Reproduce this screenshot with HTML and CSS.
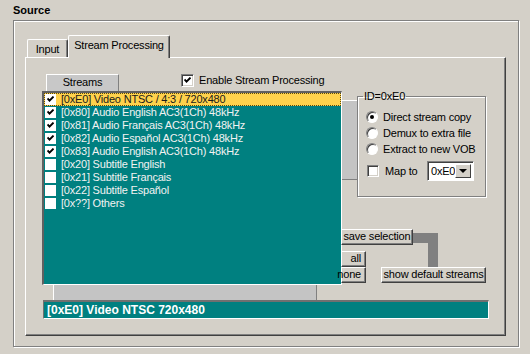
FILE: index.html
```
<!DOCTYPE html>
<html>
	<head>
		<meta charset="utf-8" />
		<title>Source</title>
		<link rel="stylesheet" href="styles.css">
	</head>
	<body>
		<div class="title">Source</div>
		<div class="group">
			<div class="tabs">
				<div class="tab">Input</div>
				<div class="tab active">Stream Processing</div>
			</div>
			<div class="panel">
				<div class="backdrop backdrop-a"></div>
				<div class="backdrop backdrop-b"></div>

				<div class="head">
					<div class="col-head">Streams</div>
					<label class="check enable"><span class="box on"></span>Enable Stream Processing</label>
				</div>

				<div class="main">
					<div class="list">
						<div class="row selected"><span class="lbox on"></span>[0xE0] Video NTSC / 4:3 / 720x480</div>
						<div class="row"><span class="lbox on"></span>[0x80] Audio English AC3(1Ch) 48kHz</div>
						<div class="row"><span class="lbox on"></span>[0x81] Audio Français AC3(1Ch) 48kHz</div>
						<div class="row"><span class="lbox on"></span>[0x82] Audio Español AC3(1Ch) 48kHz</div>
						<div class="row"><span class="lbox on"></span>[0x83] Audio English AC3(1Ch) 48kHz</div>
						<div class="row"><span class="lbox"></span>[0x20] Subtitle English</div>
						<div class="row"><span class="lbox"></span>[0x21] Subtitle Français</div>
						<div class="row"><span class="lbox"></span>[0x22] Subtitle Español</div>
						<div class="row"><span class="lbox"></span>[0x??] Others</div>
					</div>

					<div class="side">
						<fieldset class="idgroup">
							<legend>ID=0xE0</legend>
							<div class="radio"><span class="dot on"></span>Direct stream copy</div>
							<div class="radio"><span class="dot"></span>Demux to extra file</div>
							<div class="radio"><span class="dot"></span>Extract to new VOB</div>
							<div class="mapto">
								<span class="box"></span>
								<span class="maplabel">Map to</span>
								<div class="combo">
									<span class="combo-val">0xE0</span>
									<span class="combo-btn"><span class="arrow"></span></span>
								</div>
							</div>
						</fieldset>

						<div class="btn-area">
							<div class="link"></div>
							<div class="btn save">save selection</div>
							<div class="btn-row">
								<div class="small-btns">
									<div class="btn small">all</div>
									<div class="btn small">none</div>
								</div>
								<div class="btn defaults">show default streams</div>
							</div>
						</div>
					</div>
				</div>

				<div class="status">[0xE0] Video NTSC 720x480</div>
			</div>
		</div>
	</body>
</html>
```

FILE: styles.css
```
body {
	margin: 0;
	width: 530px;
	height: 354px;
	overflow: hidden;
	background-color: #d4d0c8;
	font-family: "Liberation Sans", Arial, sans-serif;
	font-size: 11px;
	letter-spacing: -0.2px;
	color: #000;
}

.title {
	height: 20px;
	box-sizing: border-box;
	padding: 4px 0 0 13px;
	line-height: 13px;
	font-weight: bold;
	letter-spacing: 0;
}

/* etched group frame */
.group {
	margin-left: 13px;
	width: 506px;
	height: 327px;
	box-sizing: border-box;
	padding: 14px 11px 0 11px;
	border: 1px solid #808080;
	box-shadow: inset 1px 1px 0 #fff, 1px 1px 0 #fff;
}

.tabs {
	display: flex;
	align-items: flex-end;
	height: 22px;
	padding-left: 2px;
}

.tab {
	width: 41px;
	height: 18px;
	box-sizing: border-box;
	padding-top: 3px;
	line-height: 13px;
	text-align: center;
	border-top: 1px solid #fff;
	border-left: 1px solid #fff;
	border-right: 1px solid #404040;
	box-shadow: inset -1px 0 0 #808080;
	border-radius: 2px 2px 0 0;
}

.tab.active {
	position: relative;
	z-index: 2;
	width: 102px;
	height: 23px;
	margin-bottom: -1px;
	padding-top: 3px;
	background-color: #d4d0c8;
}

.panel {
	position: relative;
	width: 481px;
	height: 279px;
	box-sizing: border-box;
	border-top: 1px solid #fff;
	border-left: 1px solid #fff;
	border-right: 1px solid #404040;
	border-bottom: 1px solid #404040;
	box-shadow: inset -1px -1px 0 #808080;
}

.backdrop {
	position: absolute;
	z-index: 0;
	background-color: #c4c4c4;
	border-top: 1px solid #fff;
	box-sizing: border-box;
}

.backdrop-a {
	left: 27px;
	top: 42px;
	width: 264px;
	height: 200px;
	border-left: 1px solid #fff;
	border-right: 1px solid #808080;
}

.backdrop-b {
	left: 290px;
	top: 42px;
	width: 41px;
	height: 80px;
	border-bottom: 1px solid #808080;
}

.head {
	position: relative;
	z-index: 1;
	display: flex;
	height: 17px;
	margin-top: 16px;
	padding-left: 20px;
}

.col-head {
	width: 73px;
	height: 17px;
	box-sizing: border-box;
	text-align: center;
	line-height: 15px;
	background-color: #c8c8c8;
	border-top: 1px solid #fff;
	border-left: 1px solid #fff;
	border-right: 1px solid #808080;
}

.check {
	display: flex;
	align-items: flex-start;
	line-height: 13px;
}

.enable {
	margin-left: 62px;
}

.box {
	display: inline-block;
	flex: none;
	width: 13px;
	height: 13px;
	box-sizing: border-box;
	margin-right: 5px;
	background-color: #fff;
	border-top: 1px solid #808080;
	border-left: 1px solid #808080;
	border-right: 1px solid #fff;
	border-bottom: 1px solid #fff;
	box-shadow: inset 1px 1px 0 #404040, inset -1px -1px 0 #d4d0c8;
}

.box.on,
.lbox.on {
	background-image: url("data:image/svg+xml;utf8,<svg xmlns='http://www.w3.org/2000/svg' width='7' height='7'><path d='M0.5 2.5 L2.5 4.6 L6.5 0.6' fill='none' stroke='black' stroke-width='1.9'/></svg>");
	background-repeat: no-repeat;
	background-position: center;
}

.main {
	position: relative;
	z-index: 1;
	display: flex;
	align-items: flex-start;
	height: 194px;
}

.list {
	width: 300px;
	height: 194px;
	margin-left: 16px;
	box-sizing: border-box;
	padding: 0;
	background-color: #008080;
	border-top: 2px solid #606060;
	border-left: 2px solid #606060;
	border-right: 1px solid #fff;
	border-bottom: 1px solid #fff;
	color: #f2f2f2;
}

.row {
	display: flex;
	align-items: center;
	height: 13px;
	padding-left: 1px;
	line-height: 13px;
	white-space: nowrap;
}

.row.selected {
	background-color: #ffd24c;
	color: #1a1a1a;
	outline: 1px dotted #5a4a10;
	outline-offset: -1px;
}

.lbox {
	display: inline-block;
	flex: none;
	width: 11px;
	height: 11px;
	margin-right: 5px;
	background-color: #fff;
}

.side {
	display: flex;
	flex-direction: column;
}

.idgroup {
	width: 129px;
	height: 107px;
	box-sizing: border-box;
	margin: -1px 0 0 15px;
	padding: 6px 0 0 8px;
	min-width: 0;
	border: 1px solid #808080;
	box-shadow: inset 1px 1px 0 #fff, 1px 1px 0 #fff;
}

.idgroup legend {
	margin-left: -3px;
	padding: 0 1px;
	line-height: 13px;
}

.radio {
	display: flex;
	align-items: center;
	height: 16px;
}

.dot {
	position: relative;
	flex: none;
	width: 12px;
	height: 12px;
	box-sizing: border-box;
	margin-right: 5px;
	border-radius: 50%;
	background-color: #fff;
	border: 1px solid;
	border-color: #808080 #fff #fff #808080;
	box-shadow: inset 1px 1px 0 #404040;
}

.dot.on::after {
	content: "";
	position: absolute;
	left: 3px;
	top: 3px;
	width: 4px;
	height: 4px;
	border-radius: 50%;
	background-color: #000;
}

.mapto {
	display: flex;
	align-items: center;
	margin-top: 4px;
	padding-left: 1px;
}

.mapto .box {
	width: 12px;
	height: 12px;
	margin-right: 6px;
}

.maplabel {
	width: 42px;
}

.combo {
	display: flex;
	width: 47px;
	height: 20px;
	box-sizing: border-box;
	background-color: #fff;
	border-top: 1px solid #808080;
	border-left: 1px solid #808080;
	border-right: 1px solid #fff;
	border-bottom: 1px solid #fff;
	box-shadow: inset 1px 1px 0 #404040;
}

.combo-val {
	flex: 1;
	padding: 3px 0 0 3px;
	line-height: 13px;
}

.combo-btn {
	display: flex;
	align-items: center;
	justify-content: center;
	width: 16px;
	margin: 2px 2px 2px 0;
	background-color: #d4d0c8;
	border-top: 1px solid #fff;
	border-left: 1px solid #fff;
	border-right: 1px solid #404040;
	border-bottom: 1px solid #404040;
}

.arrow {
	width: 0;
	height: 0;
	border-left: 4px solid transparent;
	border-right: 4px solid transparent;
	border-top: 4px solid #000;
}

.btn-area {
	position: relative;
	margin: 32px 0 0 -1px;
}

.link::before,
.link::after {
	content: "";
	position: absolute;
	z-index: 0;
	background-color: #808080;
}

.link::before {
	left: 72px;
	top: 4px;
	width: 25px;
	height: 10px;
}

.link::after {
	left: 87px;
	top: 4px;
	width: 10px;
	height: 34px;
}

.btn {
	position: relative;
	z-index: 1;
	box-sizing: border-box;
	height: 16px;
	line-height: 13px;
	text-align: center;
	white-space: nowrap;
	background-color: #d4d0c8;
	border-top: 1px solid #fff;
	border-left: 1px solid #fff;
	border-right: 1px solid #404040;
	border-bottom: 1px solid #404040;
	box-shadow: inset -1px -1px 0 #808080;
}

.save {
	width: 72px;
}

.btn-row {
	display: flex;
	align-items: flex-end;
	margin-top: 6px;
}

.small-btns {
	display: flex;
	flex-direction: column;
}

.small {
	display: flex;
	justify-content: flex-end;
	width: 25px;
	height: 16px;
	padding-right: 4px;
}

.defaults {
	width: 105px;
	margin-left: 15px;
}

.status {
	position: relative;
	z-index: 1;
	width: 446px;
	height: 19px;
	box-sizing: border-box;
	margin: 15px 0 0 17px;
	padding-left: 3px;
	line-height: 16px;
	font-size: 12px;
	font-weight: bold;
	letter-spacing: 0;
	color: #fff;
	background-color: #008080;
	border-top: 2px solid #707070;
	border-left: 1px solid #707070;
	border-right: 1px solid #fff;
	border-bottom: 1px solid #fff;
}
```
